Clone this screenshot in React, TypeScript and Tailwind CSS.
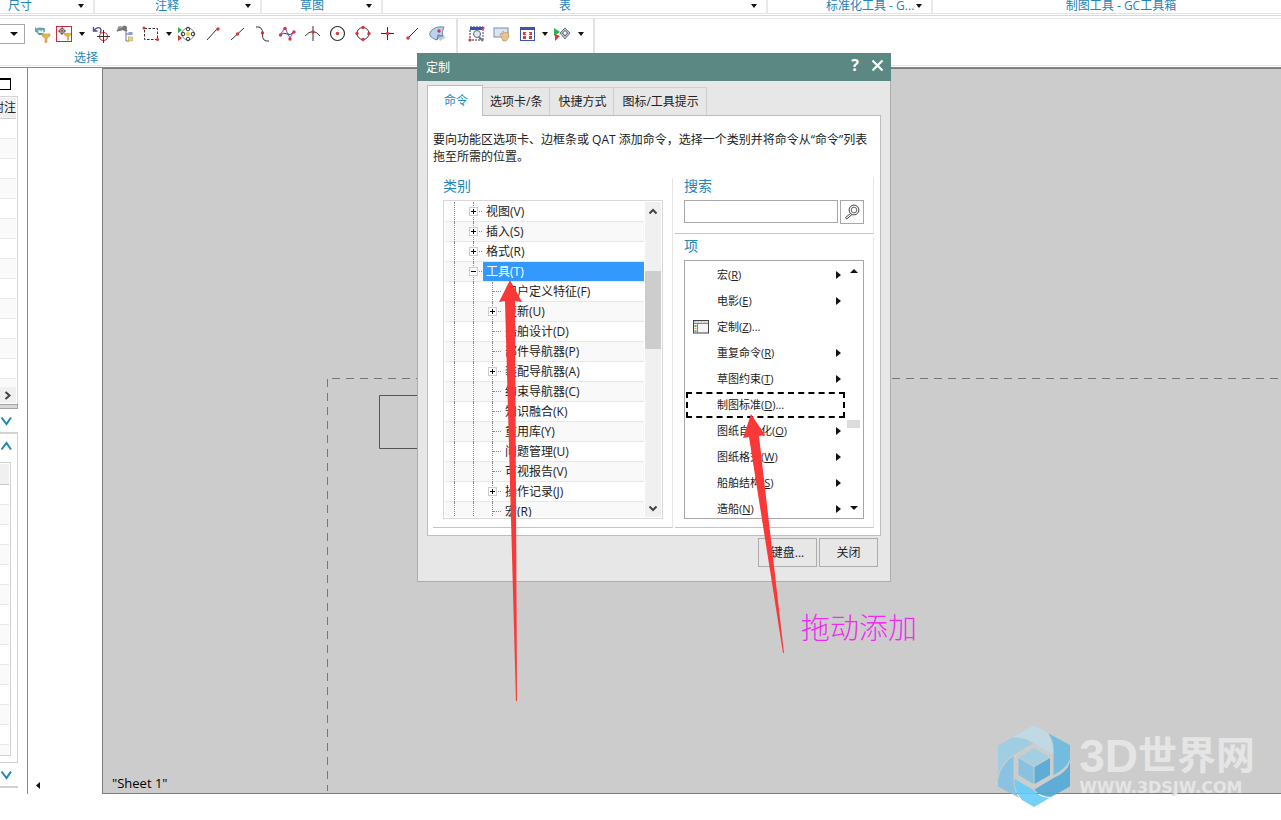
import type { ReactNode } from 'react';

const UI_FONT = "font-['Open_Sans','Noto_Sans_CJK_SC',sans-serif]";

function Caret({ className = '' }: { className?: string }) {
  return (
    <svg className={`shrink-0 ${className}`} width="6" height="4" viewBox="0 0 6 4" aria-hidden="true">
      <path d="M0 0h6L3 4z" fill="#111" />
    </svg>
  );
}

function RibbonGroup({ label, width, pad }: { label: string; width: string; pad: string }) {
  return (
    <div className={`flex h-3.5 items-start justify-between border-r-2 border-b border-r-[#e8e8e8] border-b-[#e3e3e3] ${width} ${pad}`}>
      <span className="leading-3 whitespace-nowrap text-[#2384b8]">{label}</span>
      <Caret className="mt-1" />
    </div>
  );
}

function Tool({ label, width = 'w-[25px]', children }: { label: string; width?: string; children: ReactNode }) {
  return (
    <button type="button" aria-label={label} className={`flex h-6 shrink-0 items-center justify-center ${width}`}>
      <svg width="19" height="18" viewBox="0 0 19 18" fill="none" aria-hidden="true">
        {children}
      </svg>
    </button>
  );
}

function MenuCaret({ width = 'w-3' }: { width?: string }) {
  return (
    <button type="button" aria-label="更多" className={`flex h-6 shrink-0 items-center justify-center ${width}`}>
      <Caret />
    </button>
  );
}

const RED = '#d9383a';

function Toolbar() {
  return (
    <div className="mt-0.5 flex h-12 border-y border-[#e6e6e6]">
      <div className="flex w-[458px] flex-col border-r-2 border-[#e2e2e2]">
        <div className="flex h-[30px] items-center">
          <button type="button" aria-label="选择过滤器" className="mr-[5px] flex h-5 w-[25px] items-center justify-end border border-l-0 border-[#a8a8a8] pr-1.5">
            <svg width="8" height="4" viewBox="0 0 8 4"><path d="M0 0h8L4 4z" fill="#111" /></svg>
          </button>
          <Tool label="重置过滤器" width="w-6">
            <path d="M3.500 5q0 3 4 3h3V5.500L8 3q4-1 4 2t-4 5H6L2 6z" fill="#4a9c9c" />
            <path d="M2 2v5h4L4.500 5.500Q7 5 9 6l1-3Q6 2 3.500 3.500z" fill="#5fa9a6" />
            <path d="M9 9h8v2l-3 2v4l-2 1v-5l-3-2z" fill="#e8b45a" stroke="#b98a42" strokeWidth=".6" />
          </Tool>
          <Tool label="选择范围" width="w-5">
            <rect x="1.500" y="1.500" width="15" height="15" stroke="#c92a3c" />
            <circle cx="7" cy="6" r="2.500" stroke="#555" />
            <path d="M7 2v8M3 6h8" stroke="#8b3a3a" />
            <path d="M9 8h7v2l-2 2v3l-2 1v-4l-3-2z" fill="#e8b045" />
          </Tool>
          <MenuCaret width="w-[15px]" />
          <Tool label="恢复点" width="w-6">
            <path d="M1.500 2v4h4M2 5.500q3-4 6-2.500 2 2 0 5" stroke="#4b4c86" strokeWidth="1.300" />
            <circle cx="11.500" cy="11.500" r="4" stroke={RED} strokeWidth="1.200" />
            <path d="M11.500 5v13M5 11.500h13" stroke="#333" />
          </Tool>
          <Tool label="层级选择" width="w-6">
            <circle cx="4" cy="3.500" r="2.500" fill="#999" /><circle cx="8.500" cy="3" r="2.500" fill="#777" />
            <path d="M1 6q5-4 10 0" stroke="#777" strokeWidth="2" />
            <path d="M10 6v10h3M10 9h3" stroke="#6670a8" />
            <rect x="12.500" y="7" width="4" height="3" fill="#8d9bd0" /><rect x="12.500" y="12" width="4" height="4" fill="#edd37b" stroke="#b79d63" strokeWidth=".6" />
          </Tool>
          <Tool label="矩形选择" width="w-[26px]">
            <rect x="3.500" y="3.500" width="13" height="11" stroke="#333" strokeDasharray="2.500 1.500" />
            <circle cx="3" cy="3" r="1.600" fill={RED} /><circle cx="16.500" cy="14.500" r="1.600" fill={RED} />
          </Tool>
          <MenuCaret />
          <Tool label="捕捉点">
            <path d="M0 2l4 3-4 3z" fill="#2eb34a" /><path d="M0 10l4 3-4 3z" fill={RED} />
            <circle cx="10" cy="9" r="6" stroke="#888" />
            <circle cx="10" cy="4" r="1.800" stroke="#333" /><circle cx="10" cy="14" r="1.800" stroke="#333" />
            <circle cx="5" cy="9" r="1.800" stroke="#333" /><circle cx="15" cy="9" r="1.800" stroke="#333" />
            <circle cx="10" cy="9" r="2" fill="#efd52c" />
          </Tool>
          <Tool label="端点"><path d="M4 15L14 4" stroke="#333" /><circle cx="15" cy="4" r="1.700" fill={RED} /></Tool>
          <Tool label="中点"><path d="M3 15L16 3" stroke="#333" /><circle cx="9.500" cy="9" r="1.700" fill={RED} /></Tool>
          <Tool label="控制点"><path d="M3 2q7-1 6.500 7T16 16" stroke="#333" /><circle cx="9.500" cy="8" r="1.700" fill={RED} /></Tool>
          <Tool label="样条点"><path d="M2 10l5-7 5 10 4-7" stroke="#a06ad0" strokeWidth="1.200" /><path d="M2 10q4-3 7-1t7-2" stroke="#444" /><circle cx="2.500" cy="10" r="1.700" fill={RED} /><circle cx="7" cy="3.500" r="1.700" fill={RED} /><circle cx="12" cy="14" r="1.700" fill={RED} /><circle cx="16" cy="7" r="1.700" fill={RED} /></Tool>
          <Tool label="交点"><path d="M10 1v15M2 11q8-9 15 0" stroke="#333" /><circle cx="10" cy="7" r="1.700" fill={RED} /></Tool>
          <Tool label="圆心"><circle cx="9.500" cy="8.500" r="7" stroke="#333" strokeWidth="1.200" /><circle cx="9.500" cy="8.500" r="1.700" fill={RED} /></Tool>
          <Tool label="象限点"><circle cx="10" cy="8.500" r="6" stroke="#333" /><circle cx="10" cy="2.500" r="1.700" fill={RED} /><circle cx="10" cy="14.500" r="1.700" fill={RED} /><circle cx="4" cy="8.500" r="1.700" fill={RED} /><circle cx="16" cy="8.500" r="1.700" fill={RED} /></Tool>
          <Tool label="现有点"><path d="M9.500 2v13M3 8.500h13" stroke="#333" /><circle cx="9.500" cy="8.500" r="1.700" fill={RED} /></Tool>
          <Tool label="曲线上的点"><path d="M4 14L15 3" stroke="#333" /><circle cx="5" cy="13" r="1.700" fill={RED} /></Tool>
          <Tool label="面上的点">
            <path d="M11 14l4-3 3 1-6 4z" fill="#c4c4c4" />
            <path d="M3 6q4-5 13-4-3 5-1 9l-5-1-1 5q-4-1-7-4-1-3 1-5z" fill="#bcd3ee" stroke="#6688b4" />
            <path d="M9 15l1-5 5 1" fill="#8facd6" stroke="#6688b4" /><circle cx="11" cy="6" r="1.700" fill={RED} />
          </Tool>
        </div>
        <span className="pt-[3px] pl-[74px] leading-[14px] text-[#2384b8]">选择</span>
      </div>
      <div className="flex h-[30px] w-[135px] items-center pl-1.5">
        <Tool label="缩放窗口">
          <path d="M3 2h13v13" stroke="#2747a0" strokeDasharray="2 1" /><path d="M3 2h12v3H3z" fill="#3154b2" />
          <path d="M3 5v10h13" stroke="#333" strokeDasharray="2 1" />
          <circle cx="10" cy="9" r="3.500" fill="#dde7ee" stroke="#666" /><path d="M12 12l4 4" stroke="#777" strokeWidth="2" />
          <circle cx="3" cy="15" r="1.600" fill={RED} /><circle cx="16" cy="3" r="1.600" fill={RED} />
        </Tool>
        <Tool label="平移">
          <rect x="2" y="3" width="14" height="9" fill="#dbe4f2" stroke="#7b8dae" />
          <path d="M8 9l2-1 1 1V6l2 2 3-1 1 5-3 4h-3z" fill="#e7c48d" stroke="#b68d52" strokeWidth=".6" />
        </Tool>
        <Tool label="适合窗口" width="w-[26px]">
          <rect x="2.500" y="2.500" width="14" height="13" fill="#fff" stroke="#3656ad" /><path d="M2 2h15v3H2z" fill="#3656ad" />
          <path d="M5 7h3v3H5zM11 7h3v3h-3zM5 11h3v3H5zM11 11h3v3h-3z" fill={RED} />
          <path d="M7 8.500h1.500v1.500M12 8.500h-1.500v1.500" stroke="#fff" strokeWidth=".8" />
        </Tool>
        <MenuCaret width="w-2.5" />
        <Tool label="定向视图"><path d="M1 3l6 4-6 4z" fill="#2eb34a" /><path d="M2 9l5 2-5 5z" fill={RED} /><path d="M12 3l5 5-5 6-5-6z" fill="#bcc8d8" stroke="#667489" /><path d="M12 5.500l2.500 2.500-2.500 3-2.500-3z" fill="#fff" stroke="#4a5568" /></Tool>
        <MenuCaret />
      </div>
      <div className="border-l-2 border-[#e2e2e2]" />
    </div>
  );
}

function Chevron({ d }: { d: string }) {
  return (
    <svg width="12" height="10" viewBox="0 0 12 10" fill="none" aria-hidden="true">
      <path d={d} stroke="#2384b8" strokeWidth="2" />
    </svg>
  );
}

const UP = 'M1.500 8.500L6.500 2L11 8.500';
const DOWN = 'M1.500 1.500L6.500 8L11 1.500';

function StripedRows({ count }: { count: number }) {
  return (
    <div className="min-h-0 flex-1 overflow-hidden">
      {Array.from({ length: count }, (_, i) => (
        <div key={i} className="h-5 border-b border-[#e8e8e8] odd:bg-white even:bg-[#fafafa]" />
      ))}
    </div>
  );
}

function SidePanel() {
  return (
    <aside className="flex w-[28px] shrink-0 flex-col border-r border-[#7f8a8a]">
      <button type="button" aria-label="还原窗口" className="mt-2.5 h-3 w-[11px] border border-t-2 border-l-0 border-black" />
      <div className="mt-1.5 flex h-[308px] w-[18px] flex-col border-t border-r border-[#d6d6d6] pt-px pr-px">
        <div className="flex h-[21px] items-center justify-end overflow-hidden border-b border-[#d0d0d0] bg-[#f0f0f0] whitespace-nowrap">附注</div>
        <StripedRows count={14} />
        <button type="button" aria-label="向右滚动" className="mb-px flex h-4 w-4 items-center justify-center bg-[#f0f0f0]">
          <svg width="8" height="9" viewBox="0 0 8 9" fill="none"><path d="M1.500 1l4 3.500-4 3.500" stroke="#444" strokeWidth="2" /></svg>
        </button>
      </div>
      <div className="h-[5px] w-[18px] border border-l-0 border-[#a5a5a5] bg-[#d8d8d8]" />
      <button type="button" aria-label="展开" className="flex h-[23px] items-center"><Chevron d={DOWN} /></button>
      <div className="flex min-h-0 w-[18px] flex-1 flex-col border-t-2 border-r border-b border-[#d3d3d3] pb-1.5">
        <button type="button" aria-label="折叠" className="flex h-7 shrink-0 items-center pb-1"><Chevron d={UP} /></button>
        <div className="flex min-h-0 w-[11px] flex-1 flex-col border-t border-r border-b border-[#d3d3d3] pt-px pr-px">
          <div className="h-[21px] shrink-0 border-b border-[#c8c8c8] bg-[#f0f0f0]" />
          <StripedRows count={30} />
        </div>
      </div>
      <button type="button" aria-label="展开" className="flex h-[23px] shrink-0 items-center"><Chevron d={DOWN} /></button>
      <div className="mb-1.5 h-0.5 w-[18px] shrink-0 bg-[#d0d0d0]" />
    </aside>
  );
}

type TreeNode = { label: string; child?: boolean; state?: '+' | '-'; selected?: boolean };

const TREE: TreeNode[] = [
  { label: '视图(V)', state: '+' },
  { label: '插入(S)', state: '+' },
  { label: '格式(R)', state: '+' },
  { label: '工具(T)', state: '-', selected: true },
  { label: '用户定义特征(F)', child: true },
  { label: '更新(U)', child: true, state: '+' },
  { label: '船舶设计(D)', child: true },
  { label: '部件导航器(P)', child: true },
  { label: '装配导航器(A)', child: true, state: '+' },
  { label: '约束导航器(C)', child: true },
  { label: '知识融合(K)', child: true },
  { label: '重用库(Y)', child: true },
  { label: '问题管理(U)', child: true },
  { label: '可视报告(V)', child: true },
  { label: '操作记录(J)', child: true, state: '+' },
  { label: '宏(R)', child: true },
];

function TreeRow({ node }: { node: TreeNode }) {
  return (
    <li role="treeitem" aria-selected={!!node.selected} className="flex h-5 border-b border-[#e8e8e8] odd:bg-white even:bg-[#f9f9f9]">
      <span className="h-5 w-2.5 shrink-0 border-r border-dotted border-[#888]" />
      <span className="h-5 w-[19px] shrink-0 border-r border-dotted border-[#888]" />
      {node.child && <span className="h-5 w-[19px] shrink-0 border-r border-dotted border-[#888]" />}
      <span className="relative flex w-[9px] shrink-0 items-center">
        <span className="w-2 border-t border-dotted border-[#888]" />
        {node.state && (
          <svg className="absolute top-[5px] left-[-5px]" width="9" height="9" viewBox="0 0 9 9" aria-hidden="true">
            <rect x=".5" y=".5" width="8" height="8" fill="#fff" stroke="#ccc" />
            <path d={node.state === '+' ? 'M2 4h5v1H2zM4 2h1v5H4z' : 'M2 4h5v1H2z'} fill="#000" />
          </svg>
        )}
      </span>
      <button
        type="button"
        className={`flex flex-1 items-center text-left leading-[18px] whitespace-nowrap ${
          node.selected ? 'border border-dotted border-[#c77a2a] bg-[#3399ff] pl-0.5 text-white' : 'pl-[3px] text-[#222]'
        }`}
      >
        {node.label}
      </button>
    </li>
  );
}

type Item = { label: string; accel: string; tail?: string; icon?: boolean; selected?: boolean };

const ITEMS: Item[] = [
  { label: '宏', accel: 'R' },
  { label: '电影', accel: 'E' },
  { label: '定制', accel: 'Z', tail: '...', icon: true },
  { label: '重复命令', accel: 'R' },
  { label: '草图约束', accel: 'T' },
  { label: '制图标准', accel: 'D', tail: '...', selected: true },
  { label: '图纸自动化', accel: 'O' },
  { label: '图纸格式', accel: 'W' },
  { label: '船舶结构', accel: 'S' },
  { label: '造船', accel: 'N' },
];

function ItemRow({ item }: { item: Item }) {
  return (
    <li className="h-[26px]">
      <button
        type="button"
        className={`flex h-full w-full items-center border-2 text-[11px] whitespace-nowrap text-[#222] ${
          item.selected ? 'border-dashed border-black pr-1' : 'border-transparent pr-0.5'
        }`}
      >
        <span className="flex w-[29px] items-center pl-[5px]">
          {item.icon && (
            <svg width="16" height="14" viewBox="0 0 16 14" aria-hidden="true">
              <rect x=".5" y=".5" width="15" height="12.500" fill="#f4f4f4" stroke="#444" />
              <path d="M1 3.500h14M4.500 4v9" stroke="#888" />
              <path d="M1.500 2h13" stroke="#999" strokeDasharray="2 1" />
              <path d="M1.500 5h2v2h-2z" fill="#4bb667" /><path d="M1.500 8h2v1h-2z" fill="#e4a13f" /><path d="M1.500 10h2v2h-2z" fill="#4fb8df" />
            </svg>
          )}
        </span>
        <span className="flex-1 text-left">
          {item.label}(<u className="underline-offset-1">{item.accel}</u>){item.tail}
        </span>
        {!item.tail && (
          <svg width="5" height="8" viewBox="0 0 5 8" aria-hidden="true"><path d="M0 0l5 4-5 4z" fill="#111" /></svg>
        )}
      </button>
    </li>
  );
}

function Dialog() {
  const tab = 'mt-0.5 h-7 border-t border-r border-[#cfcfcf] pr-[7px] pl-2 whitespace-nowrap';
  return (
    <section role="dialog" aria-label="定制" className="absolute top-[53px] left-[417px] w-[474px] text-[#222]">
      <header className="flex h-7 items-center bg-[#5b8882] pr-[7px] pl-[9px] text-white">
        <h2 className="flex-1 pt-px">定制</h2>
        <button type="button" aria-label="帮助" className="mr-3 pb-1 text-base leading-5 font-bold">?</button>
        <button type="button" aria-label="关闭窗口" className="pb-1">
          <svg width="13" height="13" viewBox="0 0 13 13"><path d="M1.500 1.500l10 10M11.500 1.500l-10 10" stroke="#fff" strokeWidth="2.200" /></svg>
        </button>
      </header>
      <div className="border border-t-0 border-[#acacac] bg-[#e7e7e7] px-[9px] pt-1 pb-3.5">
        <div role="tablist" className="flex items-start">
          <button type="button" role="tab" aria-selected="true" className="relative z-10 h-[31px] border border-b-0 border-[#bdbdbd] bg-white pr-3.5 pl-4 text-[#2384b8]">命令</button>
          <button type="button" role="tab" className="mt-0.5 h-7 border-t border-r border-[#cfcfcf] px-[7px] whitespace-nowrap">选项卡/条</button>
          <button type="button" role="tab" className={tab}>快捷方式</button>
          <button type="button" role="tab" className={tab}>图标/工具提示</button>
        </div>
        <div className="-mt-px border border-[#bdbdbd] bg-white pt-[15px] pr-1.5 pb-[7px] pl-[5px]">
          <p className="leading-[17px] whitespace-nowrap">
            要向功能区选项卡、边框条或 QAT 添加命令，选择一个类别并将命令从“命令”列表
            <br />
            拖至所需的位置。
          </p>
          <div className="mt-[13px] flex gap-0.5">
            <div className="w-60 border-r border-b border-r-[#e5e5e5] border-b-[#c4c4c4] pr-[9px] pb-2 pl-2.5">
              <h3 className="text-sm leading-4 text-[#2384b8]">类别</h3>
              <div className="mt-1.5 flex h-[319px] border border-[#d8d8d8] p-px">
                <ul role="tree" className="flex-1 overflow-hidden">
                  {TREE.map((node) => <TreeRow key={node.label} node={node} />)}
                </ul>
                <div className="ml-px flex w-4 flex-col items-center bg-[#f0f0f0]">
                  <button type="button" aria-label="向上滚动" className="flex h-[18px] items-center">
                    <svg width="8" height="7" viewBox="0 0 8 7" fill="none"><path d="M.5 5.500L4 2l3.500 3.500" stroke="#444" strokeWidth="2" /></svg>
                  </button>
                  <div className="mt-[51px] h-[78px] w-full bg-[#cdcdcd]" />
                  <button type="button" aria-label="向下滚动" className="mt-auto flex h-[18px] items-center">
                    <svg width="8" height="7" viewBox="0 0 8 7" fill="none"><path d="M.5 1.500L4 5l3.500-3.500" stroke="#444" strokeWidth="2" /></svg>
                  </button>
                </div>
              </div>
            </div>
            <div className="flex min-w-0 flex-1 flex-col">
              <div className="border-r border-b border-r-[#e5e5e5] border-b-[#c4c4c4] pr-[9px] pb-[9px] pl-[9px]">
                <label htmlFor="command-search" className="block text-sm leading-4 text-[#2384b8]">搜索</label>
                <div className="mt-1.5 flex items-start gap-0.5">
                  <input id="command-search" type="text" className="h-[23px] min-w-0 flex-1 border border-[#a8a8a8] px-1 outline-none" />
                  <button type="button" aria-label="搜索命令" className="flex size-6 items-center justify-center border border-[#a8a8a8]">
                    <svg width="16" height="16" viewBox="0 0 16 16" fill="none">
                      <circle cx="10" cy="6" r="4.900" stroke="#444" /><circle cx="10" cy="6" r="2.800" stroke="#666" />
                      <path d="M6.500 9.500L1.500 13.500l1.200 1.500L8 10.500" stroke="#444" />
                    </svg>
                  </button>
                </div>
              </div>
              <div className="mt-1 flex-1 border-r border-b border-r-[#e5e5e5] border-b-[#c4c4c4] pr-[9px] pb-2 pl-[9px]">
                <h3 className="text-sm leading-4 text-[#2384b8]">项</h3>
                <div className="mt-1.5 flex h-[259px] border border-[#a8a8a8] p-px">
                  <ul className="flex-1 overflow-hidden">
                    {ITEMS.map((item) => <ItemRow key={item.label} item={item} />)}
                  </ul>
                  <div className="flex w-[17px] flex-col items-center py-[7px]">
                    <button type="button" aria-label="上一项">
                      <svg className="block" width="8" height="4" viewBox="0 0 8 4"><path d="M0 4h8L4 0z" fill="#111" /></svg>
                    </button>
                    <div className="mt-[147px] h-2 w-[13px] bg-[#dcdcdc]" />
                    <button type="button" aria-label="下一项" className="mt-auto">
                      <svg className="block" width="8" height="4" viewBox="0 0 8 4"><path d="M0 0h8L4 4z" fill="#111" /></svg>
                    </button>
                  </div>
                </div>
              </div>
            </div>
          </div>
        </div>
        <div className="mt-0.5 flex justify-end gap-0.5 pr-[3px]">
          <button type="button" className="h-[29px] w-[59px] border border-[#acacac]">键盘...</button>
          <button type="button" className="h-[29px] w-[59px] border border-[#acacac]">关闭</button>
        </div>
      </div>
    </section>
  );
}

function Watermark() {
  return (
    <div className="absolute right-[26px] bottom-[13px] flex items-center gap-[9px]">
      <svg width="72" height="82" viewBox="0 0 72 82" aria-hidden="true">
        <g opacity=".9">
          <path d="M36 0L49 7.500Q56 17 54.500 29.500L36 18.500Q28 11 15.500 12Z" fill="#bfdbe8" />
          <path d="M50.500 8.500L72 20V34Q69 43 55.500 50V30Q57 18 50.500 8.500Z" fill="#6bbbe2" />
          <path d="M72 36.500V61.500L53 72Q42 72 36.500 64.500L55.500 53Q70 47 72 36.500Z" fill="#51aad8" />
          <path d="M16.500 54L35.500 65Q42 73 52 72.700L36 82L24 75Q16 66 16.500 54Z" fill="#67cdf8" />
          <path d="M15.500 31V53Q15 65 21.500 73L0 61.500V55Q3 39 15.500 31Z" fill="#84c2e4" />
          <path d="M0 51V20.500L14.500 12.700Q27 12 34.500 18.500L16 29.500Q3 37 0 51Z" fill="#9bcee5" />
          <path d="M21 32L36 23L51.500 32L36 41Z" fill="#9fd0e6" />
          <path d="M20.500 33L35.500 42V59L20.500 50Z" fill="#82c0e3" />
          <path d="M36.500 42L52 33V50L36.500 59Z" fill="#51aad8" />
        </g>
      </svg>
      <div className="flex flex-col font-['Liberation_Sans','Noto_Sans_CJK_SC',sans-serif] font-bold text-[#e5e5e5]">
        <span className="flex items-center text-[39px] leading-10 whitespace-nowrap">
          <span className="text-[46px]">3D</span>世界网
        </span>
        <span className="mt-1 font-['DejaVu_Sans',sans-serif] text-base leading-4">WWW.3DSJW.COM</span>
      </div>
    </div>
  );
}

export default function App() {
  return (
    <div className={`relative flex h-screen flex-col overflow-hidden bg-white text-xs text-[#222] ${UI_FONT}`}>
      <div className="flex border-b border-[#d8d8d8] pb-px">
        <RibbonGroup label="尺寸" width="w-[95px]" pad="pl-2 pr-[9px]" />
        <RibbonGroup label="注释" width="w-[167px]" pad="pl-[60px] pr-[9px]" />
        <RibbonGroup label="草图" width="w-[121px]" pad="pl-[38px] pr-[9px]" />
        <RibbonGroup label="表" width="w-[385px]" pad="pl-[176px] pr-[9px]" />
        <RibbonGroup label="标准化工具 - G..." width="w-[165px]" pad="pl-[58px] pr-[9px]" />
        <div className="flex h-3.5 flex-1 items-start justify-center border-b border-[#e3e3e3] pl-7">
          <span className="leading-3 whitespace-nowrap text-[#2384b8]">制图工具 - GC工具箱</span>
        </div>
      </div>
      <Toolbar />
      <div className="mt-px flex min-h-0 flex-1 border-t border-[#7f8a8a]">
        <SidePanel />
        <div className="flex w-[74px] shrink-0 items-end pb-[5px] pl-2">
          <svg width="4" height="7" viewBox="0 0 4 7" aria-hidden="true"><path d="M4 0v7L0 3.500z" fill="#111" /></svg>
        </div>
        <main className="relative flex flex-1 items-end overflow-hidden border-t border-b border-l border-[#7d7d7d] bg-[#cccccc]">
          <svg className="absolute inset-0 h-full w-full" fill="none" stroke="#777" aria-hidden="true">
            <path d="M224.500 310v412" strokeDasharray="8 6" />
            <path d="M229 309.500h2000" strokeDasharray="8 6" />
            <path d="M400 326.500H276.500v53H400" stroke="#555" />
          </svg>
          <span className="relative pb-px pl-[9px] text-[13px] leading-[17px] text-black">"Sheet 1"</span>
        </main>
      </div>
      <div className="h-[26px] shrink-0" />
      <Watermark />
      <Dialog />
      <svg className="pointer-events-none absolute inset-0 h-full w-full" fill="#fb3838" aria-hidden="true">
        <path d="M510 280L522 302L515 301L517 701H516L505 301L499 302Z" />
        <path d="M751 414L765 435L759 436L784 653H783L749 437L743 438Z" />
      </svg>
      <span className="absolute top-[605px] left-[801px] font-['Noto_Sans_CJK_SC',sans-serif] text-[29px] leading-[42px] font-light text-[#f32af3]">拖动添加</span>
    </div>
  );
}
